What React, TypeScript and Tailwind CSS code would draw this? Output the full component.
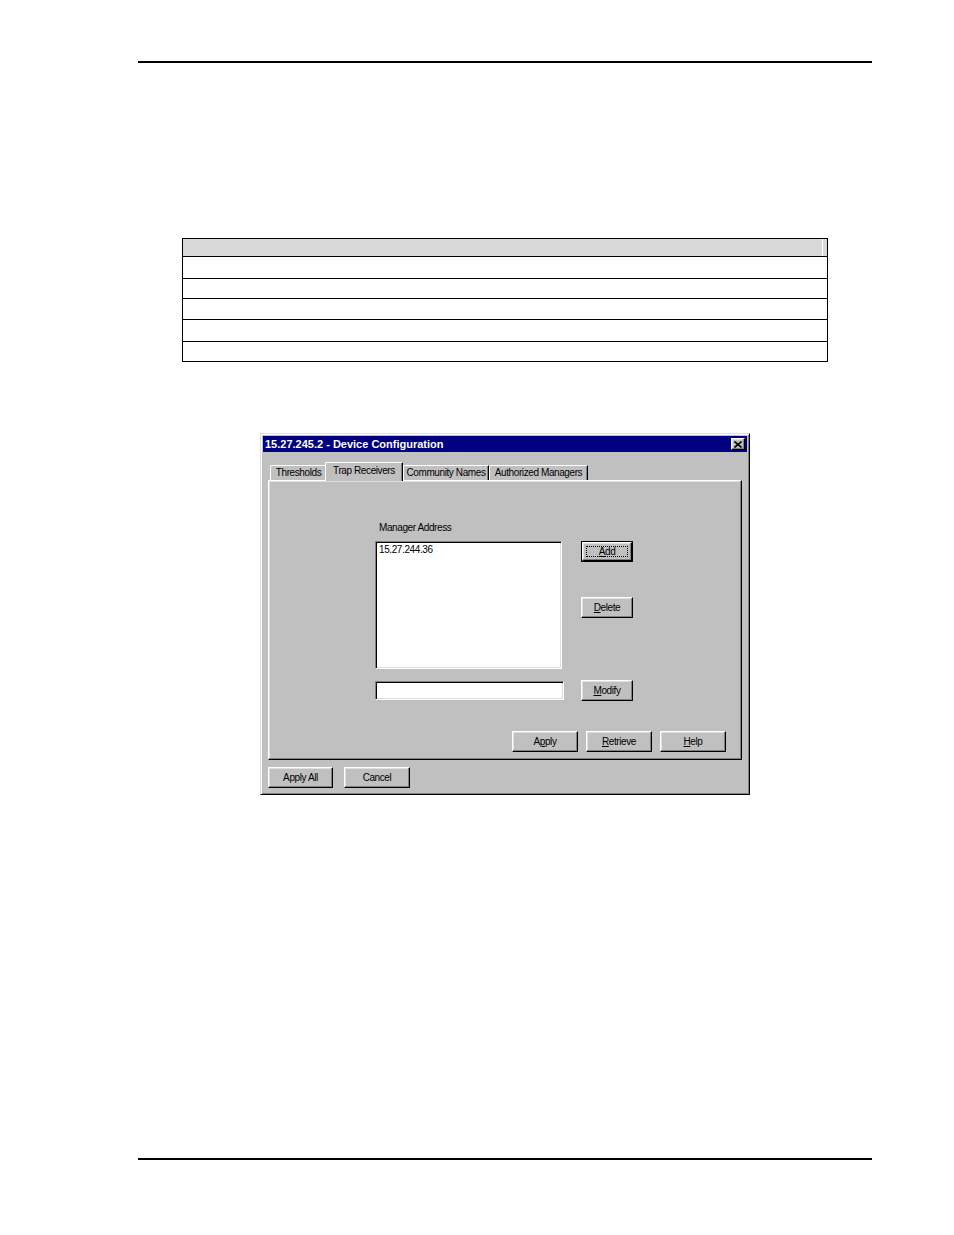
import React from "react";

const raised =
  "border border-t-white border-l-white border-r-black border-b-black shadow-[inset_-1px_-1px_0_#808080,inset_1px_1px_0_#dfdfdf]";
const sunken =
  "border border-t-[#808080] border-l-[#808080] border-r-white border-b-white shadow-[inset_1px_1px_0_#000,inset_-1px_-1px_0_#dfdfdf]";

function Btn({
  w,
  children,
  def,
}: {
  w: string;
  children: React.ReactNode;
  def?: boolean;
}) {
  if (def) {
    return (
      <div className={`${w} h-[21px] border border-black`}>
        <div className={`relative w-full h-full flex items-center justify-center bg-[#c0c0c0] ${raised}`}>
          <div className="absolute left-[3px] right-[3px] top-[3px] bottom-[3px] border border-dotted border-black" />
          <span className="leading-none">{children}</span>
        </div>
      </div>
    );
  }
  return (
    <div className={`${w} h-[21px] flex items-center justify-center bg-[#c0c0c0] ${raised}`}>
      <span className="leading-none">{children}</span>
    </div>
  );
}

function Tab({
  w,
  children,
  selected,
  extra,
}: {
  w: string;
  children: React.ReactNode;
  selected?: boolean;
  extra?: string;
}) {
  return (
    <div
      className={`${w} ${
        selected ? "h-[19px] relative z-10 -mb-[1px] bg-[#c0c0c0] pb-[2px]" : "h-[15px] bg-[#c0c0c0]"
      } ${extra ?? ""} flex items-center justify-center border-t border-l border-t-white border-l-white border-r border-r-black shadow-[inset_-1px_0_0_#808080] rounded-tl-[2px] rounded-tr-[1px]`}
    >
      <span className="leading-none">{children}</span>
    </div>
  );
}

export default function App() {
  return (
    <div className="w-[954px] h-[1235px] bg-white flex flex-col font-['Liberation_Sans',Arial,sans-serif] text-black">
      {/* top rule */}
      <div className="mt-[61px] ml-[138px] w-[734px] h-[2px] bg-black" />

      {/* table */}
      <div className="mt-[175px] ml-[182px] w-[646px] border border-black flex flex-col">
        <div className="h-[18px] bg-[#d9d9d9] border-b border-black flex justify-end pr-[4px]">
          <div className="w-[1px] h-full bg-white" />
        </div>
        <div className="h-[22px] border-b border-black" />
        <div className="h-[20px] border-b border-black" />
        <div className="h-[21px] border-b border-black" />
        <div className="h-[22px] border-b border-black" />
        <div className="h-[19px]" />
      </div>

      {/* dialog */}
      <div
        className={`mt-[71px] ml-[260px] w-[490px] h-[362px] bg-[#c0c0c0] p-[2px] flex flex-col text-[10px] tracking-[-0.4px] border border-t-[#dfdfdf] border-l-[#dfdfdf] border-r-black border-b-black shadow-[inset_1px_1px_0_#fff,inset_-1px_-1px_0_#808080]`}
      >
        {/* title bar */}
        <div className="h-[16px] bg-[#000080] flex items-center justify-between pl-[2px] pr-[2px]">
          <span className="text-white font-bold text-[11px] tracking-normal leading-none">
            15.27.245.2 - Device Configuration
          </span>
          <div className={`w-[14px] h-[12px] bg-[#c0c0c0] flex items-center justify-center ${raised}`}>
            <svg width="8" height="7" viewBox="0 0 8 7">
              <path d="M0.5 0.5 L7.5 6.5 M7.5 0.5 L0.5 6.5" stroke="#000" strokeWidth="1.6" />
            </svg>
          </div>
        </div>

        {/* tabs */}
        <div className="mt-[10px] ml-[5px] flex flex-col">
          <div className="h-[18px] flex items-end pl-[2px]">
            <Tab w="w-[57px]">Thresholds</Tab>
            <Tab w="w-[78px]" selected extra="-ml-[2px]">
              Trap Receivers
            </Tab>
            <Tab w="w-[86px]">Community Names</Tab>
            <Tab w="w-[99px]">Authorized Managers</Tab>
          </div>

          {/* panel */}
          <div className={`w-[474px] h-[280px] flex flex-col ${raised}`}>
            <div className="ml-[106px] mt-[40px] flex flex-col">
              <div className="h-[13px] pl-[4px] flex items-center">Manager Address</div>
              <div className="mt-[7px] flex items-start">
                <div className={`w-[187px] h-[128px] bg-white pl-[3px] pt-[2px] ${sunken}`}>
                  <div className="leading-[12px]">15.27.244.36</div>
                </div>
                <div className="ml-[19px] flex flex-col">
                  <Btn w="w-[52px]" def>
                    <u>A</u>dd
                  </Btn>
                  <div className="mt-[35px]">
                    <Btn w="w-[52px]">
                      <u>D</u>elete
                    </Btn>
                  </div>
                </div>
              </div>
              <div className="mt-[12px] flex items-start">
                <div className={`w-[189px] h-[19px] bg-white ${sunken}`} />
                <div className="ml-[17px] -mt-[1px]">
                  <Btn w="w-[52px]">
                    <u>M</u>odify
                  </Btn>
                </div>
              </div>
            </div>
            <div className="mt-auto mb-[7px] pr-[15px] flex justify-end gap-[8px]">
              <Btn w="w-[66px]">
                A<u>p</u>ply
              </Btn>
              <Btn w="w-[66px]">
                <u>R</u>etrieve
              </Btn>
              <Btn w="w-[66px]">
                <u>H</u>elp
              </Btn>
            </div>
          </div>

          {/* bottom buttons */}
          <div className="mt-[7px] flex gap-[11px]">
            <Btn w="w-[65px]">Apply All</Btn>
            <Btn w="w-[66px]">Cancel</Btn>
          </div>
        </div>
      </div>

      {/* bottom rule */}
      <div className="mt-[363px] ml-[138px] w-[734px] h-[2px] bg-black" />
    </div>
  );
}
